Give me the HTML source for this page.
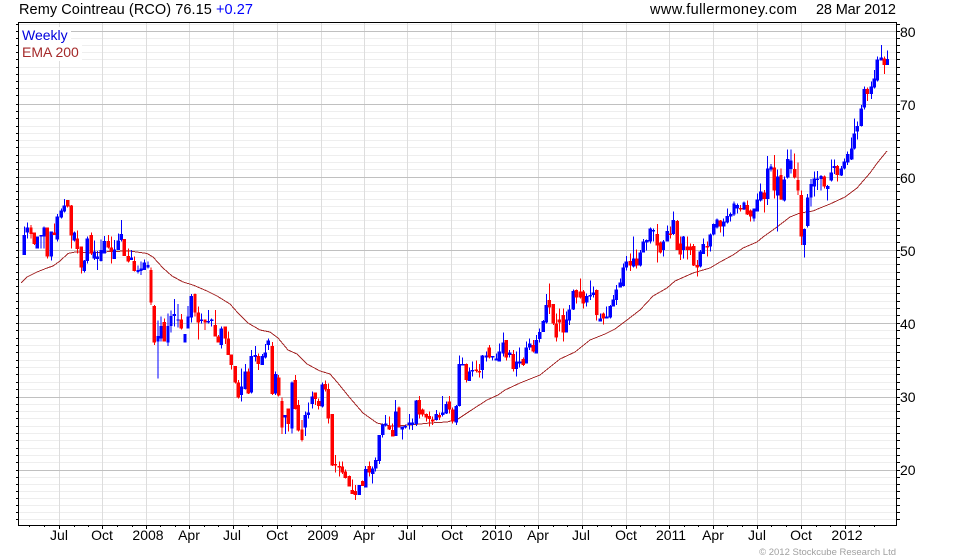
<!DOCTYPE html>
<html>
<head>
<meta charset="utf-8">
<title>Remy Cointreau (RCO)</title>
<style>
html,body{margin:0;padding:0;background:#fff;width:980px;height:560px;overflow:hidden}
svg{display:block}
text{font-family:"Liberation Sans",Arial,sans-serif;font-size:14px;fill:#000}
.c path{fill:none;shape-rendering:crispEdges}
.bw{stroke:#0000ff;stroke-width:3}
.bb{stroke:#0000ff;stroke-width:10}
.rw{stroke:#ff0000;stroke-width:3}
.rb{stroke:#ff0000;stroke-width:10}
</style>
</head>
<body>
<svg width="980" height="560" viewBox="0 0 980 560" xmlns="http://www.w3.org/2000/svg">
<defs>
<path id="mn" d="M15 24.5H900M15 38.5H900M15 45.5H900M15 52.5H900M15 59.5H900M15 67.5H900M15 74.5H900M15 81.5H900M15 88.5H900M15 95.5H900M15 111.5H900M15 118.5H900M15 126.5H900M15 133.5H900M15 140.5H900M15 147.5H900M15 155.5H900M15 162.5H900M15 169.5H900M15 184.5H900M15 191.5H900M15 199.5H900M15 206.5H900M15 213.5H900M15 220.5H900M15 228.5H900M15 235.5H900M15 242.5H900M15 257.5H900M15 264.5H900M15 272.5H900M15 279.5H900M15 286.5H900M15 293.5H900M15 301.5H900M15 308.5H900M15 315.5H900M15 330.5H900M15 338.5H900M15 345.5H900M15 352.5H900M15 360.5H900M15 367.5H900M15 374.5H900M15 382.5H900M15 389.5H900M15 404.5H900M15 411.5H900M15 418.5H900M15 426.5H900M15 433.5H900M15 440.5H900M15 448.5H900M15 455.5H900M15 462.5H900M15 477.5H900M15 484.5H900M15 491.5H900M15 498.5H900M15 505.5H900M15 512.5H900M15 519.5H900"/>
<path id="mj" d="M15 31.5H901M15 104.5H901M15 177.5H901M15 250.5H901M15 323.5H901M15 397.5H901M15 470.5H901"/>
<clipPath id="in"><rect x="19" y="23" width="877" height="502"/></clipPath>
<clipPath id="tk"><path d="M16 20H18V530H16ZM897 20H900V530H897Z"/></clipPath>
</defs>

<g shape-rendering="crispEdges">
<g stroke="#000" stroke-width="1" clip-path="url(#tk)"><use href="#mn"/><use href="#mj"/></g>
<g clip-path="url(#in)">
<use href="#mn" stroke="#eeeeee" stroke-width="1"/>
<path stroke="#dddddd" stroke-width="1" fill="none" d="M59.5 23V525M102.5 23V525M146.5 23V525M189.5 23V525M233.5 23V525M277.5 23V525M321.5 23V525M364.5 23V525M407.5 23V525M451.5 23V525M495.5 23V525M538.5 23V525M582.5 23V525M626.5 23V525M669.5 23V525M713.5 23V525M757.5 23V525M801.5 23V525M845.5 23V525"/>
<use href="#mj" stroke="#c0c0c0" stroke-width="1"/>
</g>
<rect x="19" y="27" width="52" height="17" fill="#fff"/>
<rect x="19" y="44" width="63" height="17" fill="#fff"/>
<path stroke="#000" stroke-width="1" fill="none" d="M29.5 526V527M44.5 526V527M74.5 526V527M88.5 526V527M117.5 526V527M132.5 526V527M160.5 526V527M175.5 526V527M204.5 526V527M218.5 526V527M248.5 526V527M262.5 526V527M291.5 526V527M306.5 526V527M335.5 526V527M350.5 526V527M378.5 526V527M393.5 526V527M422.5 526V527M437.5 526V527M466.5 526V527M480.5 526V527M509.5 526V527M524.5 526V527M553.5 526V527M567.5 526V527M597.5 526V527M611.5 526V527M640.5 526V527M655.5 526V527M684.5 526V527M698.5 526V527M727.5 526V527M742.5 526V527M771.5 526V527M786.5 526V527M816.5 526V527M830.5 526V527M859.5 526V527M874.5 526V527"/>
<path stroke="#000" stroke-width="1" fill="none" d="M59.5 526V529M102.5 526V529M146.5 526V529M189.5 526V529M233.5 526V529M277.5 526V529M321.5 526V529M364.5 526V529M407.5 526V529M451.5 526V529M495.5 526V529M538.5 526V529M582.5 526V529M626.5 526V529M669.5 526V529M713.5 526V529M757.5 526V529M801.5 526V529M845.5 526V529"/>
</g>

<polyline fill="none" stroke="#a52a2a" stroke-width="1" shape-rendering="crispEdges" points="21,283 27,277 37,272 47,268 53,266 60,261 68,253.5 75,252 93,253 110,251.5 130,251 147,253.5 153,257 163,268 172,276 183,282 193,285 207,291 217,296 230,304 238,313 248,323 260,330 270,332 278,338 288,350 297,354 307,364 320,371 330,374 337,382 350,398 363,413 377,423 390,426 410,425 430,423 447,422 458,419 470,411 487,400 498,395 505,390 520,383 540,375 550,367 560,359 575,352 590,340 605,334 615,329 627,320 640,310 653,296 667,288 675,281 693,273 710,268 720,262 733,255 743,248 757,242 763,237 777,227 790,217 800,213 813,211 820,208 830,204 845,197 857,188 870,173 878,162 887,151"/>

<g class="c" transform="translate(20 190) scale(.33333)">
<path class="bw" d="M13 110V195M22 98V145M52 140V175M63 135V175M72 110V175M94 125V212M112 72V155M124 55V85M133 27V68M163 125V155M193 210V247M202 140V220M223 152V210M232 183V240M243 148V215M253 138V190M283 150V207M295 130V180M304 90V155M334 180V210M354 227V250M363 215V255M373 208V240M384 215V235"/>
<path class="bb" d="M13 135V195M22 113V128M52 140V175M63 135V140M72 113V140M94 125V200M112 80V148M124 62V83M133 47V65M163 127V152M193 212V243M202 145V213M223 185V205M232 200V207M243 180V213M253 153V190M283 178V207M295 152V180M304 132V150M334 203V210M354 240V246M363 235V243M373 218V240M384 225V232"/>
<path class="rw" d="M33 105V145M43 128V165M82 113V205M103 100V135M143 30V52M154 45V175M172 122V190M184 170V250M214 128V195M265 135V175M274 140V220M313 147V198M325 175V218M343 200V245M393 232V345"/>
<path class="rb" d="M33 113V132M43 128V162M82 113V200M103 128V135M143 30V50M154 47V137M172 145V177M184 170V233M214 135V190M265 153V173M274 172V185M313 147V198M325 198V215M343 213V243M393 240V338"/>
</g>

<g class="c" transform="translate(150 270) scale(.33333)">
<path class="bw" d="M24 152V326M33 140V215M54 130V228M63 122V188M73 87V170M84 102V172M105 192V218M114 108V175M124 72V157M154 130V160M175 120V160M185 145V170M214 170V235M316 228V275M337 252V285M346 222V265M355 205V240"/>
<path class="bb" d="M24 198V215M33 168V205M54 168V218M63 138V168M73 132V138M84 148V152M105 192V218M114 140V175M124 78V142M154 148V153M175 153V158M185 148V153M214 175V225M316 255V261M337 258V285M346 248V262M355 212V225"/>
<path class="rw" d="M13 105V225M43 145V215M94 132V178M135 70V140M145 110V208M165 148V180M196 120V200M205 195V218M226 170V222M235 185V255M244 253V298M256 288V340M325 250V300"/>
<path class="rb" d="M13 108V218M43 156V214M94 148V176M135 72V128M145 128V158M165 148V158M196 165V200M205 200V218M226 170V205M235 205V255M244 253V285M256 288V338M325 258V282"/>
</g>

<g class="c" transform="translate(220 350) scale(.33333)">
<path class="bw" d="M64 55V155M76 42V118M94 0V130M167 65V135M196 195V252M216 95V250M256 185V258M265 157V205M277 125V175M307 98V172M418 405V435M437 348V413M458 350V400M467 322V365M478 255V342M488 220V262M497 195V230M527 150V258"/>
<path class="bb" d="M64 110V135M76 65V117M94 18V128M167 72V130M196 195V203M216 97V235M256 195V232M265 187V195M277 140V162M307 103V170M418 405V435M437 357V413M458 355V372M467 330V355M478 255V333M488 223V255M497 220V227M527 185V258"/>
<path class="rw" d="M55 90V145M85 55V132M157 -24V135M176 75V140M186 142V252M205 175V245M226 75V178M235 150V245M246 210V275M286 128V165M296 145V178M316 92V125M325 100V220M337 192V348M346 315V367M358 335V380M367 335V372M376 358V385M388 377V410M397 388V432M406 405V450M428 392V408M448 335V380M508 200V240M518 220V260M537 170V232"/>
<path class="rb" d="M55 98V143M85 65V130M157 -12V132M176 82V137M186 153V233M205 175V222M226 90V177M235 165V242M246 238V270M286 128V147M296 153V168M316 102V118M325 117V205M337 192V347M346 342V347M358 348V353M367 350V368M376 365V384M388 378V410M397 420V432M406 423V435M428 393V408M448 348V368M508 227V238M518 240V260M537 172V232"/>
</g>

<g class="c" transform="translate(370 320) scale(.33333)">
<path class="bw" d="M97 320V358M106 315V325M118 282V328M127 295V330M139 240V318M199 270V302M218 228V290M229 245V282M259 255V315M268 107V260M278 112V135M298 142V183M307 125V170M337 105V175M349 95V125M368 108V122M379 100V122M388 70V125M400 37V110M419 90V112M439 95V170M449 82V143M469 65V130M479 55V90M499 45V100M509 25V68M520 0V36"/>
<path class="bb" d="M97 320V328M106 318V322M118 307V315M127 307V315M139 242V312M199 282V300M218 278V285M229 252V280M259 258V308M268 132V258M278 132V136M298 155V183M307 150V155M337 107V150M349 107V112M368 108V112M379 115V122M388 95V125M400 67V100M419 97V105M439 125V147M449 125V130M469 82V130M479 70V83M499 60V100M509 36V57M520 3V36"/>
<path class="rw" d="M148 228V295M158 265V290M169 280V305M178 275V320M188 290V315M208 278V300M238 228V280M248 262V310M289 130V188M319 122V158M328 132V172M358 75V115M409 60V122M430 90V155M460 112V138M490 60V97"/>
<path class="rb" d="M148 240V283M158 268V283M169 282V293M178 288V297M188 298V305M208 285V292M238 245V268M248 268V305M289 132V180M319 148V153M328 153V158M358 82V112M409 60V112M430 102V147M460 117V135M490 75V95"/>
</g>

<g class="c" transform="translate(530 210) scale(.33333)">
<path class="bw" d="M49 252V340M109 305V365M118 285V345M130 238V300M170 250V290M181 212V270M190 230V262M211 310V335M230 290V325M241 285V325M250 255V290M259 225V285M271 205V233M280 160V230M289 138V182M311 80V172M331 120V170M340 87V128M350 88V122M361 52V100M370 55V95M400 90V140M412 47V95M430 5V75M460 78V145M511 120V172M520 85V132"/>
<path class="bb" d="M49 285V338M109 328V368M118 298V332M130 243V298M170 258V278M181 255V260M190 248V255M211 325V335M230 320V325M241 288V323M250 268V290M259 238V270M271 218V233M280 172V228M289 155V172M311 145V170M331 127V167M340 95V127M350 90V97M361 55V95M370 60V65M400 95V120M412 63V95M430 30V72M460 80V120M511 125V170M520 102V132"/>
<path class="rw" d="M58 220V312M70 282V345M79 310V395M88 295V365M100 295V395M139 238V280M151 205V265M160 240V295M200 238V332M220 308V343M301 130V183M320 118V175M382 42V158M391 95V130M421 50V85M442 30V120M451 80V150M472 80V148M481 100V135M491 102V168M502 150V200M532 95V140"/>
<path class="rb" d="M58 270V292M70 282V340M79 340V382M88 328V338M100 315V368M139 240V262M151 245V262M160 245V280M200 240V315M220 310V325M301 153V167M320 145V167M382 72V107M391 97V127M421 70V75M442 33V120M451 100V133M472 110V120M481 110V120M491 108V167M502 165V172M532 108V113"/>
</g>

<g class="c" transform="translate(700 140) scale(.33333)">
<path class="bw" d="M31 280V335M41 250V287M51 235V265M71 235V290M82 205V250M92 218V245M102 185V228M112 190V220M132 185V210M162 205V245M172 160V215M182 130V185M203 48V195M213 72V95M233 88V275M253 110V185M263 28V115M273 28V100M313 265V352M323 162V262"/>
<path class="bb" d="M31 283V320M41 252V283M51 238V262M71 245V260M82 228V248M92 222V230M102 190V224M112 195V205M132 188V208M162 205V235M172 178V215M182 155V182M203 85V177M213 80V88M233 110V167M253 118V182M263 57V112M273 62V87M313 267V315M323 172V258"/>
<path class="rw" d="M61 240V278M122 195V215M142 182V225M152 208V245M193 150V218M223 45V175M243 85V180M284 40V115M294 68V165M304 152V315"/>
<path class="rb" d="M61 242V260M122 204V208M142 195V223M152 212V230M193 158V177M223 82V152M243 105V178M284 87V113M294 120V152M304 165V290"/>
</g>

<g class="c" transform="translate(800 30) scale(.33333)">
<path class="bw" d="M33 447V530M43 425V500M52 423V480M63 435V482M83 465V512M94 388V455M103 388V432M124 408V438M133 385V418M143 365V405M155 322V390M163 265V358M172 275V328M184 225V290M193 170V238M214 155V207M223 120V175M232 80V155M244 45V92M262 62V105"/>
<path class="bb" d="M33 462V503M43 445V470M52 445V450M63 438V447M83 468V477M94 427V452M103 408V414M124 415V437M133 395V415M143 372V398M155 355V388M163 310V355M172 288V305M184 235V288M193 177V233M214 170V192M223 145V172M232 88V152M244 82V92M262 87V105"/>
<path class="rw" d="M73 437V475M112 405V455M202 173V213M253 80V132"/>
<path class="rb" d="M73 440V470M112 408V435M202 177V192M253 85V105"/>
</g>

<rect x="18.5" y="22.5" width="878" height="503" fill="none" stroke="#000" stroke-width="1" shape-rendering="crispEdges"/>

<text x="19" y="14" textLength="234" lengthAdjust="spacing" style="font-size:14.5px">Remy Cointreau (RCO) 76.15 <tspan fill="#0000ff">+0.27</tspan></text>
<text x="650" y="14" textLength="147" lengthAdjust="spacing" style="font-size:14.5px">www.fullermoney.com</text>
<text x="816" y="14" textLength="80" lengthAdjust="spacing" style="font-size:14.5px">28 Mar 2012</text>
<text x="22" y="40" style="fill:#0000dd">Weekly</text>
<text x="22" y="57" style="fill:#a52a2a">EMA 200</text>

<text x="900" y="37">80</text>
<text x="900" y="110">70</text>
<text x="900" y="183">60</text>
<text x="900" y="256">50</text>
<text x="900" y="329">40</text>
<text x="900" y="402">30</text>
<text x="900" y="475">20</text>

<g text-anchor="middle">
<text x="59" y="540">Jul</text>
<text x="102" y="540">Oct</text>
<text x="148" y="540">2008</text>
<text x="189" y="540">Apr</text>
<text x="232" y="540">Jul</text>
<text x="277" y="540">Oct</text>
<text x="323" y="540">2009</text>
<text x="364" y="540">Apr</text>
<text x="407" y="540">Jul</text>
<text x="452" y="540">Oct</text>
<text x="497" y="540">2010</text>
<text x="538" y="540">Apr</text>
<text x="581" y="540">Jul</text>
<text x="626" y="540">Oct</text>
<text x="671" y="540">2011</text>
<text x="713" y="540">Apr</text>
<text x="757" y="540">Jul</text>
<text x="801" y="540">Oct</text>
<text x="847" y="540">2012</text>
</g>

<text x="896" y="555" text-anchor="end" style="font-size:9.5px;fill:#a0a0a0">© 2012 Stockcube Research Ltd</text>
</svg>
</body>
</html>
